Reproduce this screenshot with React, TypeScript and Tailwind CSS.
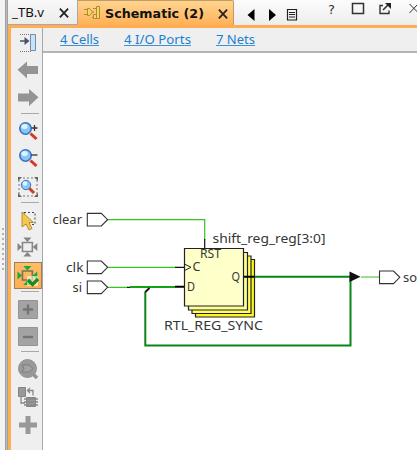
import React from "react";

const ui = "font-['Noto_Sans','DejaVu_Sans',sans-serif]";

type LabelProps = { x: number; y: number; w: number; size?: number; fill?: string; bold?: boolean; children: string };

function Label({ x, y, w, size = 13, fill = "#363636", bold, children }: LabelProps) {
  return (
    <text x={x} y={y} textLength={w} lengthAdjust="spacingAndGlyphs" fontSize={size} fill={fill} className={bold ? "font-['DejaVu_Sans',sans-serif] font-bold" : "font-normal"}>
      {children}
    </text>
  );
}

function TabTitle({ text, width, bold }: { text: string; width: number; bold?: boolean }) {
  return (
    <svg width={width} height="20" className="shrink-0 overflow-visible">
      <Label x={0} y={bold ? 14.5 : 15} w={width} size={12.5} fill="#111" bold={bold}>{text}</Label>
    </svg>
  );
}

function Cross({ size = 9 }: { size?: number }) {
  return (
    <svg width={size} height={size} viewBox="0 0 9 9" className="shrink-0">
      <path d="M.8.6 8.2 8.4M8.2.6.8 8.4" stroke="#222" strokeWidth="1.6" />
    </svg>
  );
}

function Tabs() {
  return (
    <header className="flex h-[25px] shrink-0 bg-linear-to-b from-[#fcfcfc] to-[#ededed]">
      <div className="flex h-[25px] w-[70px] items-center border-r border-b border-[#a8a8a8] bg-linear-to-b from-[#f8f8f8] to-[#ececec] pl-[4px]">
        <div className="-mt-px"><TabTitle text="_TB.v" width={32} /></div>
        <div className="ml-[15px] mt-[2px]"><Cross size={10} /></div>
      </div>
      <div className="flex h-[25px] w-[156px] items-center rounded-tr-[2px] border-t border-r border-[#c39b60] bg-linear-to-b from-[#ffd490] to-[#ffb156] pl-[6px]">
        <svg width="17" height="16" className="shrink-0" fill="#f7d75c" stroke="#b08a38" strokeWidth="1">
          <path d="M0 4.500h3M0 9.500h3M7 7h3M9 3.500h3M8 12.500h4" />
          <path d="M3.500 3.500h2l3 3.500-3 3.500h-2zM12.500 1.500h3v12h-3zM9.500 9.500h3v4h-3z" />
        </svg>
        <div className="ml-[4px] -mt-px"><TabTitle text="Schematic (2)" width={99} bold /></div>
        <div className="ml-[14px] mt-[1px]"><Cross size={10} /></div>
      </div>
      <svg width="183" height="25" className="shrink-0" fill="none" stroke="#333">
        <path d="M20.500 9v12l-7-6zM35 9v12l7-6z" fill="#000" stroke="none" />
        <path d="M53.500 9.500h9v10.500h-9z" stroke="#222" strokeWidth="1.200" />
        <path d="M55 12.500h6M55 14.500h6M55 17h6" stroke="#222" />
        <text x="94" y="14" fontSize="13" fill="#333" stroke="none" className="font-['DejaVu_Sans',sans-serif]">?</text>
        <path d="M118.500 3.500h11v10h-11z" strokeWidth="1.500" />
        <path d="M149 5.500h-3v8h9v-3" strokeWidth="1.400" />
        <path d="m149 10 5-5" strokeWidth="1.600" />
        <path d="M151 3h6v6z" fill="#222" stroke="none" />
        <path d="m175.500 4 9 9M184 4l-8.500 9" />
      </svg>
    </header>
  );
}

function Link({ text, width }: { text: string; width: number }) {
  return (
    <a className="block">
      <svg width={width} height="21" className="block overflow-visible">
        <Label x={0} y={14.5} w={width} size={12.8} fill="#1c80d1">{text}</Label>
        <path d={`M0 16.500H${width}`} stroke="#3b93da" />
      </svg>
    </a>
  );
}

function Magnifier() {
  return (
    <>
      <path d="m12.500 11.500 6 5.500" stroke="#d33a20" strokeWidth="3" />
      <circle cx="7.500" cy="6.500" r="5.700" fill="#8ac5f7" stroke="#3973c5" strokeWidth="1.600" />
      <ellipse cx="6.500" cy="4.500" rx="3.200" ry="2.500" fill="#e0f3ff" />
    </>
  );
}

function Tool({ h, children }: { h: number; children: React.ReactNode }) {
  return (
    <svg width="22" height={h} viewBox={`0 0 22 ${h}`} fill="none" className="block shrink-0 overflow-visible">
      {children}
    </svg>
  );
}

function CellIcon({ active }: { active?: boolean }) {
  const c = active ? "#14ad35" : "#858585";
  return (
    <>
      <path d="M5.500 5.500h11v10h-11z" stroke={active ? "#777453" : "#888"} strokeWidth="1.800" />
      <path d="M6.500 0h9L11 5zM6.500 21h9L11 16zM0 6v9l5-4.500zM22 6v9l-5-4.500z" fill={c} />
    </>
  );
}

const Divider = () => <div className="h-px w-[18px] shrink-0 self-center bg-[#a9a9a9]" />;

function Toolbar() {
  return (
    <aside className="flex w-[32px] shrink-0 flex-col border-r border-[#a7a7a7] bg-[#efefef] pl-[7px]">
      <Tool h={30}>
        <path d="M2 6.500h11M2 23.500h11" stroke="#777" strokeDasharray="1 1" />
        <path d="M2 13h8" stroke="#48546a" strokeWidth="1.500" />
        <path d="M6.500 9v8l5-4z" fill="#48546a" />
        <path d="M12.500 6.500h5v16h-5z" fill="#c5e4fa" stroke="#738da8" />
      </Tool>
      <Tool h={28}><path d="M-.5 11.800 9 3.500V8H20v8H9v4.500z" fill="#949494" /></Tool>
      <Tool h={26}><path d="M20.500 11.300 11 3v4.500H0v8h11V20z" fill="#949494" /></Tool>
      <div className="mt-px flex flex-col"><Divider /></div>
      <div className="mt-[8px]"><Tool h={27}><Magnifier /><path d="M13.500 6h6M16.500 3v6" stroke="#333" strokeWidth="1.300" /></Tool></div>
      <Tool h={28}><Magnifier /><path d="M13 6h6.500" stroke="#333" strokeWidth="1.300" /></Tool>
      <Tool h={25}>
        <path d="M1 1h18v18H1z" stroke="#777" strokeDasharray="2 2" />
        <path d="M0 0h4L0 4zM20 0h-4l4 4zM0 20h4l-4-4zM20 20h-4l4-4z" fill="#666" />
        <path d="m11 11 5 5" stroke="#d33a20" strokeWidth="3" />
        <circle cx="8" cy="8" r="4.700" fill="#8ac5f7" stroke="#3973c5" />
        <circle cx="7" cy="6.500" r="2.200" fill="#e0f3ff" />
      </Tool>
      <Divider />
      <div className="mt-[7px]"><Tool h={27}>
        <path d="M6 2.500h11v12H6z" stroke="#444" strokeDasharray="2 2" />
        <path d="M4 2v15l4-3 3 6 3-1.500-3-6h4.500z" fill="#f5c654" stroke="#b48327" strokeWidth=".9" />
      </Tool></div>
      <Tool h={25}><g transform="translate(-.5 .5) scale(.9)"><CellIcon /></g></Tool>
      <div className="-ml-[4px] flex h-[27px] w-[28px] shrink-0 border border-[#9e8057] bg-linear-to-b from-[#ffbd6c] to-[#ffad51] pl-[3px] pt-[3px]">
        <Tool h={21}>
          <g transform="translate(-.5 0) scale(.9)"><CellIcon active /></g>
          <path d="M9 10h11v10H9z" fill="#fff" opacity=".55" />
          <path d="m10 14 4.500 4.500 5.500-5.500" stroke="#178b1d" strokeWidth="3.200" />
        </Tool>
      </div>
      <div className="mt-[2px] flex flex-col"><Divider /></div>
      <div className="mt-[8px]"><Tool h={27}>
        <path d="M.5.5h19v18H.5z" fill="#a3a3a3" stroke="#949494" /><path d="M5 9.500h10M10 4.500v10" stroke="#747474" strokeWidth="2.400" />
      </Tool></div>
      <Tool h={24}><path d="M.5.5h19v18H.5z" fill="#a3a3a3" stroke="#949494" /><path d="M5 10h10" stroke="#747474" strokeWidth="2.400" /></Tool>
      <Divider />
      <div className="mt-[7px]"><Tool h={28}>
        <path d="m14 14 5 5" stroke="#929292" strokeWidth="3.500" />
        <circle cx="9.500" cy="9.500" r="9" fill="#999" stroke="#929292" />
        <path d="M4 6h7l4 3.500-4 3.500H4l2-3.500z" fill="#a3a3a3" stroke="#7e7e7e" />
      </Tool></div>
      <Tool h={29}>
        <path d="M.5.5h7v9h-7zM8.500 10.500h9v9h-9z" fill="#999" stroke="#858585" />
        <path d="M6 12h14M6 15h14M6 18h14M3 10v6h4M10 3.500h5v5M12 1 9.500 3.500 12 6" stroke="#888" strokeWidth="1.300" />
      </Tool>
      <Tool h={20}><path d="M7.500 0h5v6.500H19v5h-6.500V18h-5v-6.500H1v-5h6.500z" fill="#999" /></Tool>
    </aside>
  );
}

function Port({ x, y }: { x: number; y: number }) {
  return <path d={`M${x} ${y - 6.3}h14l6.300 6.300-6.300 6.300h-14z`} fill="#fff" stroke="#333" strokeWidth="1.100" />;
}

function Schematic() {
  return (
    <svg viewBox="43 53 374 397" width="374" height="397" className={`block ${ui}`} fill="none">
      <path d="M107 219.700H204.700V240M107 267.300H175M107 287.300H127M361 277H379" stroke="#35c51e" strokeWidth="1.200" />
      <path d="M130 287H175" stroke="#12a512" strokeWidth="2.200" />
      <path d="M253 276.700H350.500V345.500H145.300V291.500" stroke="#0a8518" strokeWidth="2" />
      <path d="M145.300 292 149.500 288" stroke="#111" strokeWidth="1.800" />
      <path d="M127 287.300h3M204.700 239v9M175 267.300h10" stroke="#111" strokeWidth="1.200" />
      <path d="M195.500 259.500h59v57.500h-59z" fill="#fff51f" stroke="#222" strokeWidth="1.200" />
      <path d="M192 256h59v57.500h-59z" fill="#ffff65" stroke="#222" strokeWidth="1.200" />
      <path d="M188.500 252.500h59V310h-59z" fill="#ffff91" stroke="#222" strokeWidth="1.200" />
      <path d="M184.500 248.500h59v57.500h-59z" fill="#ffffca" stroke="#222" strokeWidth="1.200" />
      <path d="M185 264.300 191 267.300 185 270.300" stroke="#222" />
      <path d="M175 286.800h9M244 276.700h10" stroke="#000" strokeWidth="2" />
      <path d="M349.500 271.500v10.500l11-5.300z" fill="#111" />
      <Port x={87.3} y={219.7} /><Port x={87.3} y={267.3} /><Port x={87.3} y={287.3} /><Port x={379.500} y={277.300} />
      <Label x={52.5} y={224} w={29.5}>clear</Label>
      <Label x={66} y={271.500} w={17.5}>clk</Label>
      <Label x={72.500} y={291.500} w={9.500}>si</Label>
      <Label x={403} y={281.500} w={14}>so</Label>
      <Label x={212.5} y={243} w={113}>shift_reg_reg[3:0]</Label>
      <Label x={164} y={330} w={99}>RTL_REG_SYNC</Label>
      <Label x={200} y={258} w={21} size={12}>RST</Label>
      <Label x={192.500} y={271} w={8} size={12}>C</Label>
      <Label x={187} y={290.800} w={8} size={12}>D</Label>
      <Label x={231.500} y={281} w={8.500} size={12}>Q</Label>
    </svg>
  );
}

export default function App() {
  return (
    <div className={`flex h-[450px] w-[417px] overflow-hidden bg-[#f3f3f3] ${ui}`}>
      <div className="flex w-[5px] shrink-0 flex-col items-center gap-[3px] pt-[228px]">
        {Array.from({ length: 9 }, (_, i) => <span key={i} className="size-[2px] bg-[#b3b3b3]" />)}
      </div>
      <div className="w-[3px] shrink-0 border-x border-[#a0a0a0] bg-[#bbb]" />
      <main className="flex w-[409px] shrink-0 flex-col">
        <Tabs />
        <div className="h-[3px] shrink-0 bg-[#ffad53]" />
        <div className="flex min-h-0 flex-1">
          <div className="w-[3px] shrink-0 bg-[#ffad53]" />
          <Toolbar />
          <div className="flex flex-1 flex-col bg-white">
            <nav className="flex h-[25px] shrink-0 items-start gap-[25px] border-b-2 border-[#b4b4b4] bg-[#efefef] pl-[17px] pt-px">
              <Link text="4 Cells" width={39} />
              <Link text="4 I/O Ports" width={67} />
              <Link text="7 Nets" width={39} />
            </nav>
            <Schematic />
          </div>
        </div>
      </main>
    </div>
  );
}
